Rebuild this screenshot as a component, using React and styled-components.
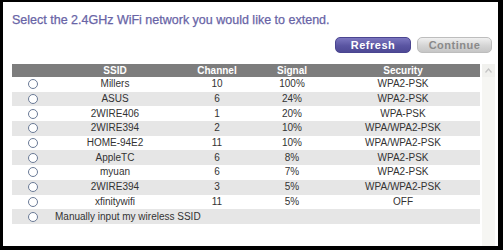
import React from 'react';
import styled, { createGlobalStyle } from 'styled-components';

const GlobalStyle = createGlobalStyle`
  html, body {
    margin: 0;
    padding: 0;
    background: #000;
  }
  body {
    font-family: "Liberation Sans", Arial, sans-serif;
  }
`;

const networks = [
  { ssid: 'Millers', channel: 10, signal: '100%', security: 'WPA2-PSK' },
  { ssid: 'ASUS', channel: 6, signal: '24%', security: 'WPA2-PSK' },
  { ssid: '2WIRE406', channel: 1, signal: '20%', security: 'WPA-PSK' },
  { ssid: '2WIRE394', channel: 2, signal: '10%', security: 'WPA/WPA2-PSK' },
  { ssid: 'HOME-94E2', channel: 11, signal: '10%', security: 'WPA/WPA2-PSK' },
  { ssid: 'AppleTC', channel: 6, signal: '8%', security: 'WPA2-PSK' },
  { ssid: 'myuan', channel: 6, signal: '7%', security: 'WPA2-PSK' },
  { ssid: '2WIRE394', channel: 3, signal: '5%', security: 'WPA/WPA2-PSK' },
  { ssid: 'xfinitywifi', channel: 11, signal: '5%', security: 'OFF' },
];

const App = () => {
  return (
    <>
      <GlobalStyle />
      <Panel>
        <Title>Select the 2.4GHz WiFi network you would like to extend.</Title>
        <Actions>
          <Button primary>Refresh</Button>
          <Button>Continue</Button>
        </Actions>
        <ListArea>
          <Table>
            <colgroup>
              <col style={{ width: 42 }} />
              <col style={{ width: 122 }} />
              <col style={{ width: 82 }} />
              <col style={{ width: 68 }} />
              <col style={{ width: 154 }} />
            </colgroup>
            <thead>
              <tr>
                <HeadCell />
                <HeadCell>SSID</HeadCell>
                <HeadCell>Channel</HeadCell>
                <HeadCell>Signal</HeadCell>
                <HeadCell>Security</HeadCell>
              </tr>
            </thead>
            <tbody>
              {networks.map((n, i) => (
                <Row key={i} striped={i % 2 === 1}>
                  <Cell><Radio /></Cell>
                  <Cell>{n.ssid}</Cell>
                  <Cell>{n.channel}</Cell>
                  <Cell>{n.signal}</Cell>
                  <Cell>{n.security}</Cell>
                </Row>
              ))}
              <Row striped>
                <Cell><Radio /></Cell>
                <Cell colSpan={4} left>Manually input my wireless SSID</Cell>
              </Row>
            </tbody>
          </Table>
          <Scrollbar>
            <ScrollUp>
              <svg width="7" height="5" viewBox="0 0 7 5">
                <path d="M0.5 4.5 L3.5 1 L6.5 4.5" fill="none" stroke="#c4c4c4" strokeWidth="1.2" />
              </svg>
            </ScrollUp>
          </Scrollbar>
        </ListArea>
      </Panel>
    </>
  );
};

const Panel = styled.div`
  margin: 2px 0 0 3px;
  width: 495px;
  height: 244px;
  background: #fff;
  box-sizing: border-box;
  padding: 10px 0 0 9px;
  display: flex;
  flex-direction: column;
`;

const Title = styled.div`
  font-size: 12.5px;
  line-height: 16px;
  color: #6864a6;
  -webkit-text-stroke: 0.25px #6864a6;
`;

const Actions = styled.div`
  display: flex;
  justify-content: flex-end;
  gap: 6px;
  margin-top: 9px;
  padding-right: 6px;
`;

const Button = styled.div`
  width: ${(p) => (p.primary ? '76px' : '75px')};
  height: 16px;
  border-radius: 5px;
  box-sizing: border-box;
  display: flex;
  align-items: center;
  justify-content: center;
  font-size: 11px;
  font-weight: bold;
  letter-spacing: 0.5px;
  color: ${(p) => (p.primary ? '#fff' : '#8a8a8a')};
  background: ${(p) =>
    p.primary
      ? 'linear-gradient(#7c77c0, #5a55a2 55%, #4e4995)'
      : 'linear-gradient(#f0f0f0, #d4d4d4 55%, #c6c6c6)'};
  border: 1px solid ${(p) => (p.primary ? '#4a4590' : '#bdbdbd')};
`;

const ListArea = styled.div`
  display: flex;
  flex: 1;
  margin-top: 11px;
  align-items: stretch;
`;

const Table = styled.table`
  width: 468px;
  border-collapse: collapse;
  table-layout: fixed;
  align-self: flex-start;
`;

const HeadCell = styled.th`
  height: 13px;
  padding: 0;
  background: #7d7d7d;
  color: #fff;
  font-size: 10px;
  font-weight: bold;
  text-align: center;
  line-height: 13px;
`;

const Row = styled.tr`
  background: ${(p) => (p.striped ? '#e6e6e6' : '#fff')};
`;

const Cell = styled.td`
  height: 14.7px;
  padding: ${(p) => (p.left ? '0 0 0 1px' : '0')};
  font-size: 10px;
  line-height: 14px;
  color: #333;
  text-align: ${(p) => (p.left ? 'left' : 'center')};
  vertical-align: middle;
  white-space: nowrap;
`;

const Radio = styled.span`
  display: block;
  width: 10px;
  height: 10px;
  margin: 0 auto;
  box-sizing: border-box;
  border-radius: 50%;
  border: 1px solid #6a7a96;
  background: #fff;
`;

const Scrollbar = styled.div`
  width: 13px;
  margin-left: 2px;
  background: #f6f6f3;
  display: flex;
  flex-direction: column;
`;

const ScrollUp = styled.div`
  height: 13px;
  display: flex;
  align-items: center;
  justify-content: center;
  background: #f1f1ee;
`;

export default App;
